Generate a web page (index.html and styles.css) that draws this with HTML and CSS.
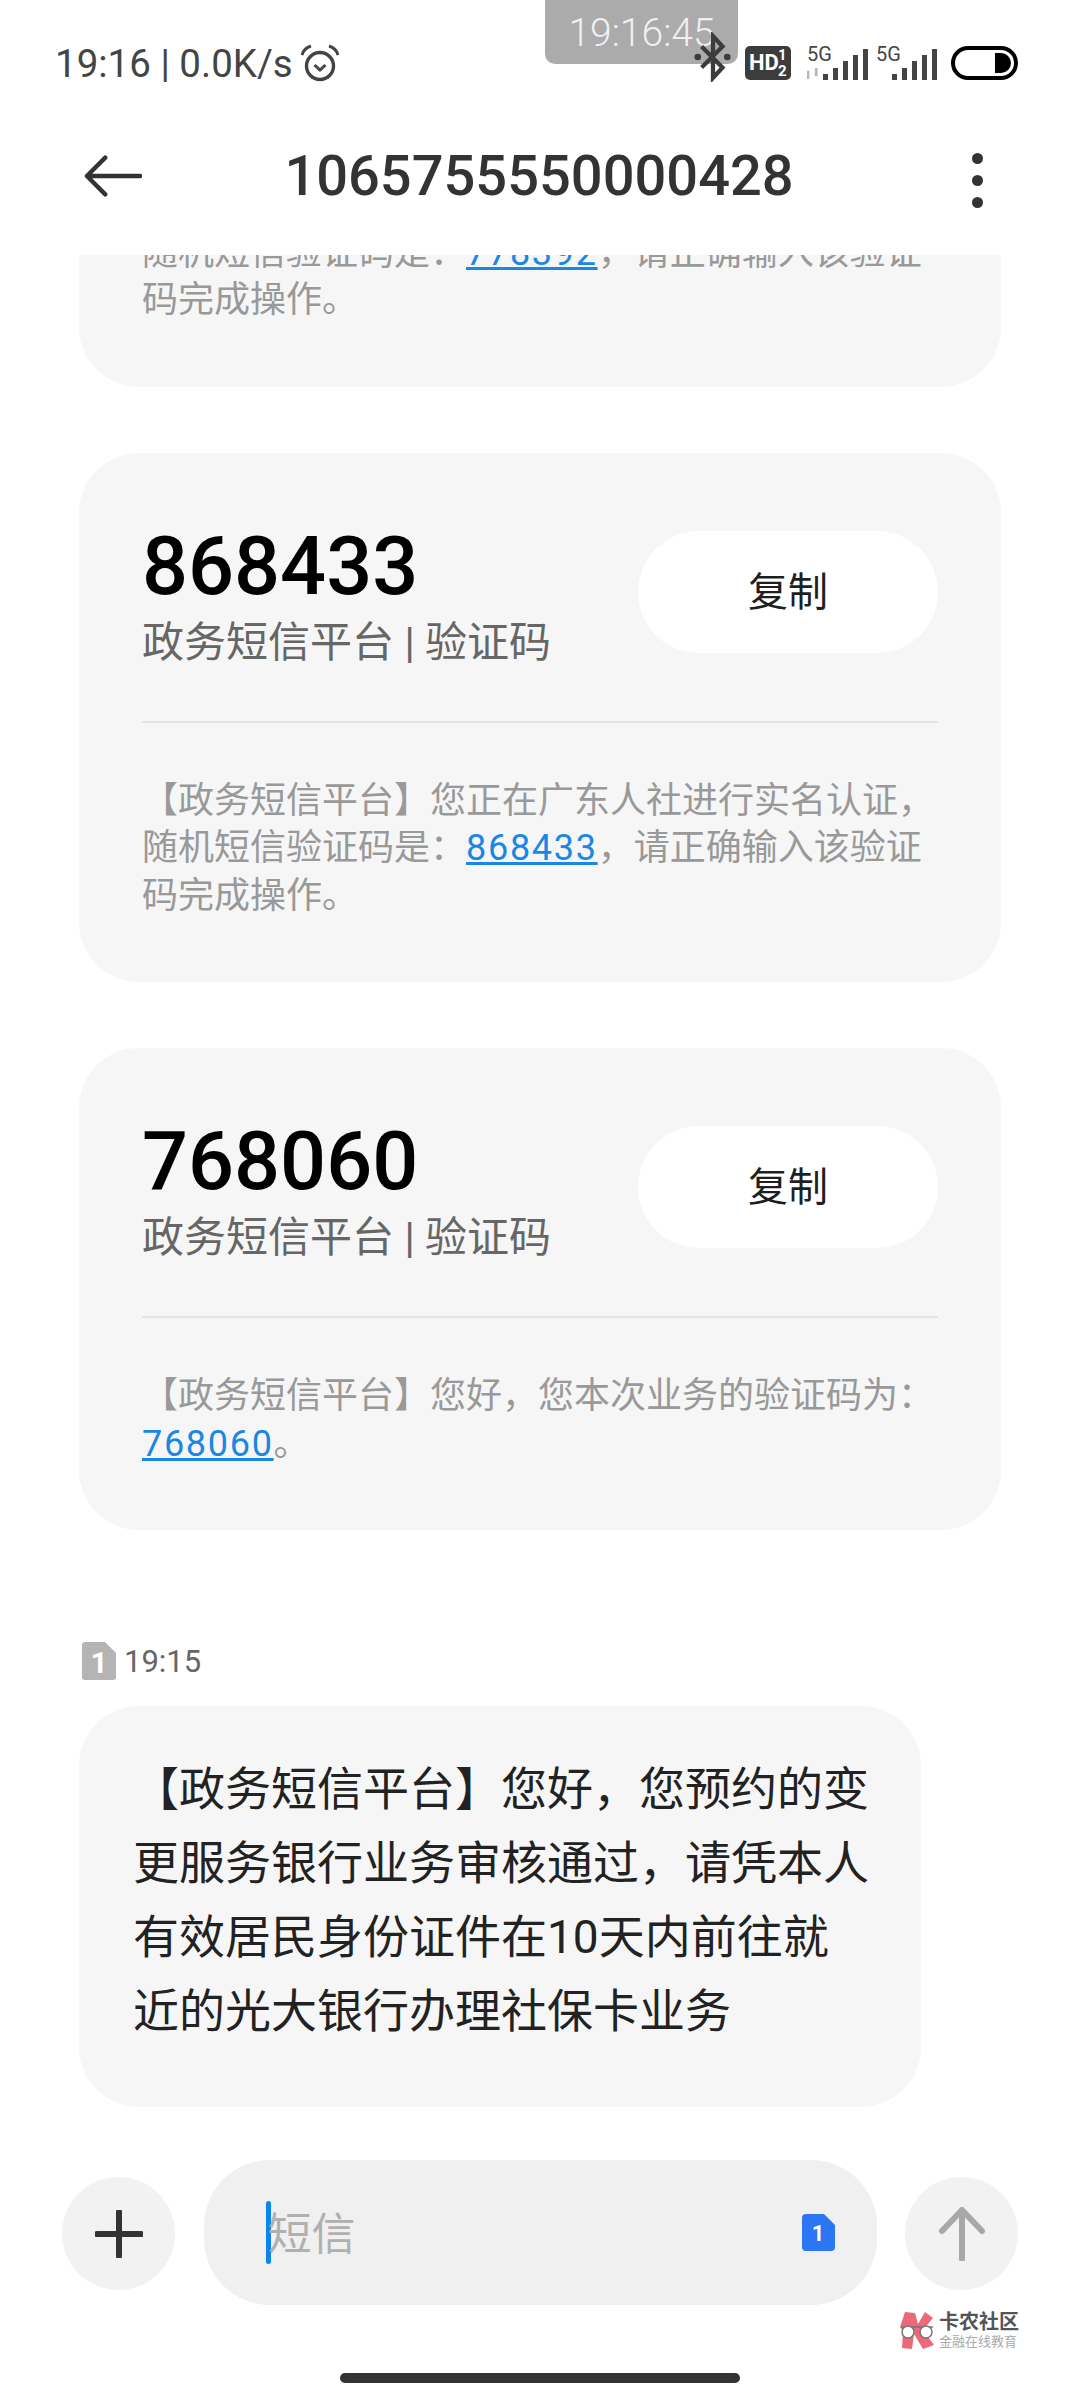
FILE: index.html
```html
<!DOCTYPE html>
<html lang="zh-CN">
<head>
<meta charset="utf-8">
<title>1065755550000428</title>
<link rel="stylesheet" href="styles.css">
</head>
<body>
<div class="page">
  <div class="pill">19:16:45</div>
  <div class="status">
    <div class="status-left">
      <span>19:16 | 0.0K/s</span>
      <svg class="alarm" viewBox="0 0 40 40"><circle cx="20" cy="22" r="13.5" fill="none" stroke="#444" stroke-width="3.4"/><path d="M14.5 21l5.500 5 5.500-5" fill="none" stroke="#444" stroke-width="3"/><path d="M2 11Q4 4 11 2M38 11Q36 4 29 2" fill="none" stroke="#444" stroke-width="3"/></svg>
    </div>
    <div class="status-right">
      <svg class="bt" viewBox="0 0 40 52"><path d="M8 15l22 22-10 11V4l10 11L8 37" fill="none" stroke="#3c3c3c" stroke-width="4.500"/><circle cx="4" cy="26" r="3.500" fill="#3c3c3c"/><circle cx="35" cy="26" r="3.500" fill="#3c3c3c"/></svg>
      <svg class="hd" viewBox="0 0 46 34"><rect width="46" height="34" rx="5" fill="#3c3c3c"/><text x="4" y="24" class="hd-text">HD</text><text x="33" y="14" class="hd-sub">1</text><text x="33" y="30" class="hd-sub">2</text></svg>
      <div class="net">
        <span class="net-label">5G</span>
        <svg class="bars" viewBox="0 0 48 32"><path d="M1 26h5v6H1zM11 20h5v12h-5zM21 13h5v19h-5zM31 7h5v25h-5zM41 1h5v31h-5z" fill="#444"/></svg>
        <svg class="updown" viewBox="0 0 14 12"><path d="M1 12V3M10 0v9" stroke="#b8b8b8" stroke-width="3" fill="none"/></svg>
      </div>
      <div class="net">
        <span class="net-label">5G</span>
        <svg class="bars" viewBox="0 0 48 32"><path d="M1 26h5v6H1zM11 20h5v12h-5zM21 13h5v19h-5zM31 7h5v25h-5zM41 1h5v31h-5z" fill="#444"/></svg>
      </div>
      <svg class="battery" viewBox="0 0 67 34"><rect x="2" y="2" width="63" height="30" rx="15" fill="none" stroke="#000" stroke-width="4"/><path d="M44 7h6a10 10 0 0 1 0 20h-6z" fill="#000"/></svg>
    </div>
  </div>

  <header class="appbar">
    <svg class="back" viewBox="0 0 60 44"><path d="M22 3L3 22l19 19M3 22h55" fill="none" stroke="#333" stroke-width="4.500" stroke-linecap="round" stroke-linejoin="round"/></svg>
    <h1 class="title">1065755550000428</h1>
    <div class="more"><i></i><i></i><i></i></div>
  </header>

  <main class="thread">
    <div class="thread-list">
      <article class="card">
        <div class="card-main">
          <div class="card-info">
            <div class="code">778392</div>
            <div class="source">政务短信平台 | 验证码</div>
          </div>
          <div class="copy">复制</div>
        </div>
        <p class="body">【政务短信平台】您正在广东人社进行实名认证，随机短信验证码是：<a class="link">778392</a>，请正确输入该验证码完成操作。</p>
      </article>
      <article class="card">
        <div class="card-main">
          <div class="card-info">
            <div class="code">868433</div>
            <div class="source">政务短信平台 | 验证码</div>
          </div>
          <div class="copy">复制</div>
        </div>
        <p class="body">【政务短信平台】您正在广东人社进行实名认证，随机短信验证码是：<a class="link">868433</a>，请正确输入该验证码完成操作。</p>
      </article>
      <article class="card">
        <div class="card-main">
          <div class="card-info">
            <div class="code">768060</div>
            <div class="source">政务短信平台 | 验证码</div>
          </div>
          <div class="copy">复制</div>
        </div>
        <p class="body">【政务短信平台】您好，您本次业务的验证码为：<a class="link">768060</a>。</p>
      </article>
      <div class="meta">
        <svg class="sim-gray" viewBox="0 0 34 38"><path d="M3 0h20l11 11v24a3 3 0 0 1-3 3H3a3 3 0 0 1-3-3V3a3 3 0 0 1 3-3z" fill="#b4b4b4"/><text x="17" y="31" class="sim-text">1</text></svg>
        <span>19:15</span>
      </div>
      <div class="bubble">【政务短信平台】您好，您预约的变更服务银行业务审核通过，请凭本人有效居民身份证件在10天内前往就近的光大银行办理社保卡业务</div>
    </div>
  </main>

  <footer class="composer">
    <div class="round">
      <svg class="plus" viewBox="0 0 48 48"><path d="M24 2v44M2 24h44" stroke="#333" stroke-width="6" stroke-linecap="round"/></svg>
    </div>
    <div class="field">
      <span class="caret"></span>
      <span class="placeholder">短信</span>
      <svg class="sim-blue" viewBox="0 0 33 37"><path d="M4 0h18l11 11v22a4 4 0 0 1-4 4H4a4 4 0 0 1-4-4V4a4 4 0 0 1 4-4z" fill="#2a76f5"/><text x="16" y="27" class="sim-blue-text">1</text></svg>
    </div>
    <div class="round">
      <svg class="send" viewBox="0 0 48 54"><path d="M24 52V3M4 24L24 3l20 21" fill="none" stroke="#a8a8a8" stroke-width="6" stroke-linecap="round" stroke-linejoin="round"/></svg>
    </div>
  </footer>
  <div class="home-bar"></div>

  <div class="watermark">
    <svg class="wm-logo" viewBox="0 0 38 38"><path d="M5 1l10 1 3 11 7-12 8 6-10 12 11 15-11 4-9-15-2 15-10-1 1-17-3-4z" fill="#ec6a78"/><path d="M1 16h32" stroke="#777" stroke-width="1.500"/><ellipse cx="8" cy="21" rx="6" ry="6" fill="#fff" stroke="#777" stroke-width="1.500"/><ellipse cx="26" cy="21" rx="6" ry="6" fill="#fff" stroke="#777" stroke-width="1.500"/></svg>
    <div class="wm-text">
      <div class="wm-name">卡农社区</div>
      <div class="wm-sub">金融在线教育</div>
    </div>
  </div>
</div>
</body>
</html>
```

FILE: styles.css
```css
* { box-sizing: border-box; }
html, body { margin: 0; padding: 0; background: #fff; }
body { font-family: Roboto, "Noto Sans CJK SC", sans-serif; }

.page {
  position: relative;
  width: 1080px;
  height: 2400px;
  display: flex;
  flex-direction: column;
  overflow: hidden;
  background: #fff;
}

/* Status bar */
.status {
  position: relative;
  z-index: 2;
  height: 126px;
  flex: none;
  display: flex;
  justify-content: space-between;
  align-items: flex-start;
  padding: 41px 62px 0 55px;
}
.status-left {
  display: flex;
  align-items: center;
  gap: 7px;
  font-size: 38.500px;
  line-height: 46px;
  font-weight: 400;
  color: #444;
}
.alarm { width: 40px; height: 40px; }
.status-right { display: flex; align-items: flex-start; }
.bt { width: 38px; height: 50px; margin: -9px 13px 0 0; }
.hd { width: 46px; height: 34px; margin: 5px 10px 0 0; }
.hd-text { font: 700 22px Roboto, sans-serif; fill: #fff; }
.hd-sub { font: 700 15px Roboto, sans-serif; fill: #fff; }
.net { position: relative; width: 69px; height: 40px; margin-top: 5px; }
.net-label {
  position: absolute;
  left: 6px;
  top: -3px;
  font-size: 20px;
  line-height: 22px;
  color: #444;
}
.bars { position: absolute; right: 0; top: 2px; width: 48px; height: 32px; }
.updown { position: absolute; left: 6px; top: 22px; width: 13px; height: 11px; }
.battery { width: 67px; height: 34px; margin: 5px 0 0 12px; }

.pill {
  position: absolute;
  left: 545px;
  top: 0;
  width: 193px;
  height: 64px;
  border-radius: 0 0 10px 10px;
  background: #ababab;
  color: #f0f0f0;
  font-size: 39px;
  font-weight: 300;
  line-height: 66px;
  text-align: center;
}

/* App bar */
.appbar {
  position: relative;
  z-index: 1;
  height: 129px;
  flex: none;
  display: flex;
  align-items: flex-start;
  padding: 0 0 0 84px;
  background: #fff;
}
.back { width: 58px; height: 44px; margin-top: 28px; flex: none; }
.title {
  margin: 12px 0 0 141px;
  font-size: 56px;
  line-height: 76px;
  font-weight: 500;
  color: #333;
  width: 512px;
  text-align: center;
}
.more {
  margin: 27px 0 0 177px;
  display: flex;
  flex-direction: column;
  gap: 11px;
}
.more i {
  display: block;
  width: 11px;
  height: 11px;
  border-radius: 50%;
  background: #333;
}

/* Thread */
.thread { flex: 1; min-height: 0; overflow: hidden; }
.thread-list {
  margin-top: -398px;
  padding: 0 79px;
  display: flex;
  flex-direction: column;
}
.card {
  width: 922px;
  margin-bottom: 66px;
  padding: 61px 63px 62px;
  border-radius: 60px;
  background: #f6f6f6;
}
.card-main {
  display: flex;
  justify-content: space-between;
  align-items: flex-start;
  padding-bottom: 55px;
  border-bottom: 2px solid #e3e3e3;
}
.code {
  font-size: 81px;
  line-height: 106px;
  font-weight: 500;
  color: #000;
}
.source {
  font-size: 42px;
  line-height: 46px;
  color: #666;
}
.copy {
  width: 300px;
  height: 122px;
  margin-top: 17px;
  border-radius: 61px;
  background: #fff;
  text-align: center;
  font-size: 40px;
  line-height: 124px;
  color: #1f1f1f;
}
.body {
  margin: 55px 0 0;
  font-size: 36px;
  line-height: 47.500px;
  color: #999;
}
.link { color: #1a87e5; text-decoration: underline; letter-spacing: 1.700px; }

.meta {
  display: flex;
  align-items: center;
  gap: 8px;
  height: 38px;
  margin: 46px 0 0 3px;
  font-size: 31px;
  color: #666;
}
.sim-gray { width: 34px; height: 38px; }
.sim-text { font: 700 30px Roboto, sans-serif; fill: #fff; text-anchor: middle; }
.bubble {
  width: 842px;
  height: 401px;
  margin-top: 26px;
  padding: 46px 50px 0 54px;
  border-radius: 60px;
  background: #f6f6f6;
  font-size: 46px;
  line-height: 74px;
  color: #222;
}

/* Composer */
.composer {
  height: 145px;
  flex: none;
  display: flex;
  align-items: center;
  justify-content: space-between;
  padding: 0 62px;
  margin-top: 53px;
}
.round {
  width: 113px;
  height: 113px;
  margin-top: 2px;
  border-radius: 50%;
  background: #f2f2f2;
  display: flex;
  align-items: center;
  justify-content: center;
  flex: none;
}
.plus { width: 48px; height: 48px; }
.send { width: 48px; height: 54px; }
.field {
  width: 673px;
  height: 145px;
  border-radius: 66px;
  background: #f0f0f0;
  display: flex;
  align-items: center;
  padding: 0 42px 0 62px;
  flex: none;
}
.caret {
  width: 5px;
  height: 63px;
  border-radius: 3px;
  background: #0a84f0;
  flex: none;
}
.placeholder {
  margin: -3px 0 0 -3px;
  font-size: 44px;
  color: #b0b0b0;
  flex: 1;
}
.sim-blue { width: 33px; height: 37px; flex: none; }
.sim-blue-text { font: 700 22px Roboto, sans-serif; fill: #fff; text-anchor: middle; }

.home-bar {
  width: 400px;
  height: 10px;
  flex: none;
  margin: 68px auto 17px;
  border-radius: 5px;
  background: #333;
}

/* Watermark */
.watermark {
  position: absolute;
  left: 900px;
  top: 2311px;
  display: flex;
  gap: 1px;
  align-items: center;
}
.wm-logo { width: 38px; height: 38px; }
.wm-text { line-height: 1; }
.wm-name { font-size: 20px; line-height: 23px; font-weight: 700; color: #555; }
.wm-sub { font-size: 13px; line-height: 15px; color: #aaa; }
```
